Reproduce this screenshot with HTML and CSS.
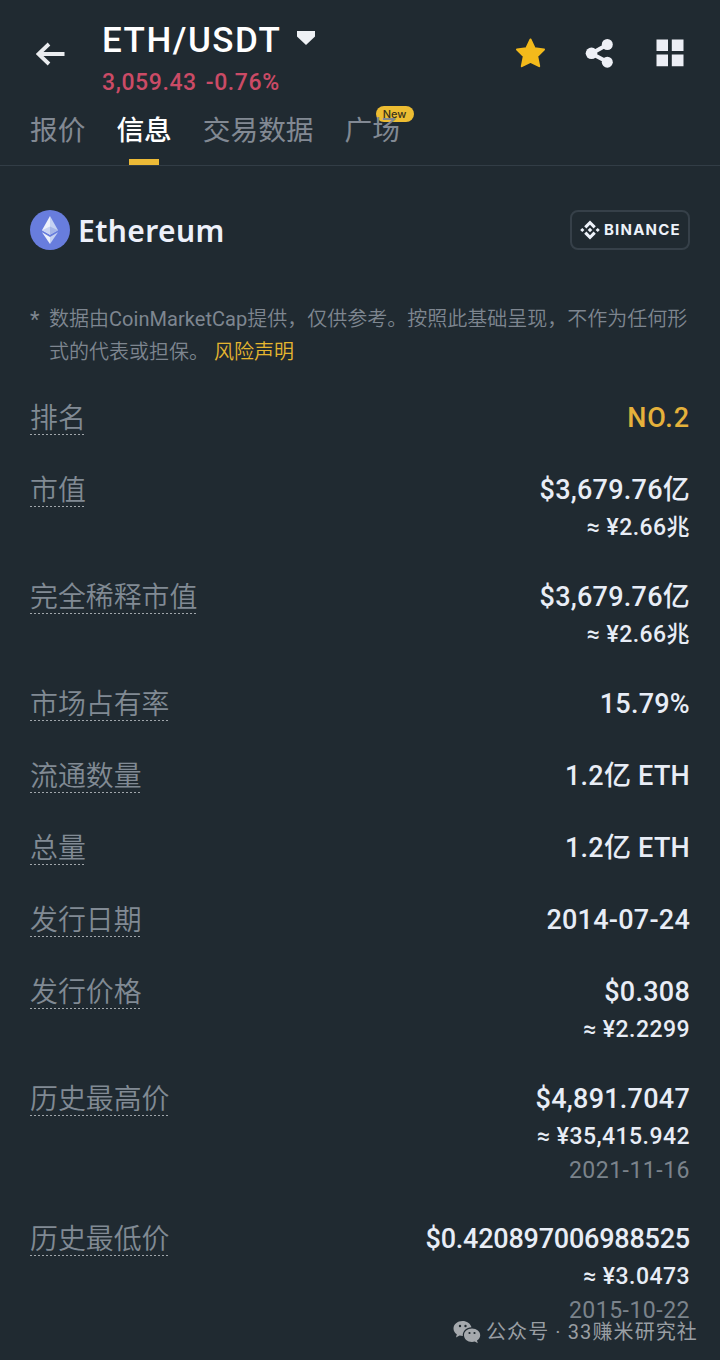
FILE: index.html
```html
<!DOCTYPE html>
<html lang="zh-CN">
<head>
<meta charset="utf-8">
<title>ETH/USDT</title>
<link rel="stylesheet" href="styles.css">
</head>
<body>
<header class="header">
  <svg class="back" width="30" height="24" viewBox="0 0 30 24" fill="none" stroke="#eaecef" stroke-width="3.800"><path d="M28.500 12H3M13 2 2.500 12 13 22"/></svg>
  <div class="pair">
    <div class="pair-name"><span class="pair-title">ETH/USDT</span><svg width="20" height="16" viewBox="0 0 20 16"><path d="M1 1h18v5.500L10 15 1 6.500z" fill="#eef1f5"/></svg></div>
    <div class="pair-price"><span>3,059.43</span><span>-0.76%</span></div>
  </div>
  <div class="actions">
    <svg width="32" height="32" viewBox="0 0 32 32"><path d="M16.500 2.500 20.600 11.200 30 12.500 23.200 19.200 25.200 29.200 16.500 24.800 7.800 29.200 9.800 19.200 3 12.500 12.400 11.200z" fill="#f3ba1b" stroke="#f3ba1b" stroke-width="2" stroke-linejoin="round"/></svg>
    <svg width="32" height="32" viewBox="0 0 32 32" fill="#eef0f6"><path d="M23.500 7.500 7.500 16.500l16 8.500" fill="none" stroke="#eef0f6" stroke-width="4"/><circle cx="23.300" cy="7.500" r="5.500"/><circle cx="7.500" cy="16.300" r="5.800"/><circle cx="23.300" cy="25.200" r="5.500"/></svg>
    <svg width="32" height="32" viewBox="0 0 32 32" fill="#eceef5"><path d="M2.500 2.500H14V14H2.500zM17.800 2.500h11.700V14H17.800zM2.500 17.500H14v11.800H2.500zM17.800 17.500h11.700v11.800H17.800z"/></svg>
  </div>
</header>
<nav class="tabs">
  <span class="tab">报价</span>
  <span class="tab tab-active">信息</span>
  <span class="tab">交易数据</span>
  <span class="tab"><b class="badge">New</b><span class="tab-label">广场</span></span>
</nav>
<main class="content">
  <div class="coin">
    <svg width="40" height="40" viewBox="0 0 40 40"><circle cx="20" cy="20" r="20" fill="#687ddd"/><path d="M20 6v18.800l-8-4.600z" fill="#eef2fb"/><path d="M20 6v18.800l8-4.600z" fill="#c5d1f2"/><path d="M20 16.500v8.300l-8-4.600z" fill="#c9d4f3"/><path d="M20 16.500v8.300l8-4.600z" fill="#a5b5e8"/><path d="M12 22.300l8 4.700v7z" fill="#edf2fb"/><path d="M28 22.300 20 27v7z" fill="#c5d1f2"/></svg>
    <h1 class="coin-name">Ethereum</h1>
    <div class="brand">
      <svg width="20" height="20" viewBox="0 0 20 20" fill="#edf2fa"><path d="M10 .4l5.800 5.800-2.200 2.200L10 4.800 6.400 8.400 4.200 6.200zM10 19.600l5.800-5.800-2.200-2.200L10 15.200l-3.600-3.600-2.200 2.200zM10 7.700l2.300 2.300-2.300 2.300L7.700 10zM2.300 7.900 4.400 10l-2.100 2.100L.2 10zM17.700 7.900l2.100 2.100-2.100 2.100-2.100-2.100z"/></svg>
      <span class="brand-name">BINANCE</span>
    </div>
  </div>
  <div class="note"><span class="star">*</span><p class="note-text">数据由<span class="latin">CoinMarketCap</span>提供，仅供参考。按照此基础呈现，不作为任何形<br>式的代表或担保。<a class="risk">风险声明</a></p></div>
  <section class="stats">
    <div class="row"><span class="label">排名</span><div class="values"><div class="main rank">NO.2</div></div></div>
    <div class="row"><span class="label">市值</span><div class="values"><div class="main">$3,679.76亿</div><div class="sub">≈ ¥2.66兆</div></div></div>
    <div class="row"><span class="label">完全稀释市值</span><div class="values"><div class="main">$3,679.76亿</div><div class="sub">≈ ¥2.66兆</div></div></div>
    <div class="row"><span class="label">市场占有率</span><div class="values"><div class="main">15.79%</div></div></div>
    <div class="row"><span class="label">流通数量</span><div class="values"><div class="main">1.2亿 ETH</div></div></div>
    <div class="row"><span class="label">总量</span><div class="values"><div class="main">1.2亿 ETH</div></div></div>
    <div class="row"><span class="label">发行日期</span><div class="values"><div class="main">2014-07-24</div></div></div>
    <div class="row"><span class="label">发行价格</span><div class="values"><div class="main">$0.308</div><div class="sub">≈ ¥2.2299</div></div></div>
    <div class="row"><span class="label">历史最高价</span><div class="values"><div class="main">$4,891.7047</div><div class="sub">≈ ¥35,415.942</div><div class="date">2021-11-16</div></div></div>
    <div class="row"><span class="label">历史最低价</span><div class="values"><div class="main main-long">$0.420897006988525</div><div class="sub">≈ ¥3.0473</div><div class="date">2015-10-22</div></div></div>
  </section>
</main>
<div class="watermark">
  <svg width="28" height="24" viewBox="0 0 28 24"><path d="M9.500 1C4.500 1 .5 4.300.5 8.500c0 2.400 1.300 4.400 3.300 5.800L3 17.500l3.600-1.900c1 .3 2 .4 3.200.4-.3-5.200 3.700-8.700 8.700-8.700C17.400 3.400 13.800 1 9.500 1z" fill="#a5a9ad"/><path d="M19 8.500c-4.700 0-8 3-8 6.700s3.300 6.700 8 6.700c1 0 2-.2 2.800-.4l3 1.700-.8-2.800c1.900-1.200 3.200-3.100 3.200-5.200 0-3.700-3.500-6.700-8.200-6.700z" fill="#a5a9ad"/><g fill="#1f292f"><circle cx="7" cy="6" r="1.200"/><circle cx="12.500" cy="6" r="1.200"/><circle cx="16.500" cy="13" r="1.100"/><circle cx="21.500" cy="13" r="1.100"/></g></svg>
  <span class="watermark-text">公众号 · 33赚米研究社</span>
</div>
</body>
</html>
```
FILE: styles.css
```css
* { box-sizing: border-box; }
body {
  margin: 0;
  width: 720px;
  height: 1360px;
  overflow: hidden;
  position: relative;
  background: #202a31;
  color: #e8edf6;
  font-family: Roboto, "Noto Sans CJK SC", sans-serif;
}
svg { display: block; flex: none; }
.header { display: flex; height: 104px; padding: 16px 34px 0 36px; }
.back { margin-top: 26px; }
.pair { margin-left: 36px; flex: 1; }
.pair-name { display: flex; align-items: center; height: 48px; padding-top: 1px; gap: 15px; }
.pair-name svg { margin-bottom: 6px; }
.pair-title { font-size: 35px; line-height: 48px; font-weight: 500; letter-spacing: 1.5px; color: #fff; }
.pair-price { display: flex; gap: 9px; height: 36px; padding-top: 1px; line-height: 36px; font-size: 23px; font-weight: 500; letter-spacing: .6px; color: #cb4b66; }
.actions { display: flex; gap: 38px; padding-top: 21px; }
.tabs { display: flex; gap: 31px; height: 62px; padding-left: 30px; border-bottom: 1px solid #323d46; }
.tab { position: relative; font-family: "Noto Sans CJK SC", sans-serif; font-size: 27.7px; line-height: 48px; color: #828993; font-weight: 400; }
.tab-active { color: #fff; font-weight: 500; }
.tab-active::after { content: ""; position: absolute; left: 13px; top: 55px; width: 30px; height: 6px; background: #ecba37; }
.tab-label { position: relative; }
.badge { position: absolute; left: 31px; top: 2px; width: 38px; height: 16px; border-radius: 8px; background: #edbd32; color: #3a331d; font: 500 11px/16px Inter, sans-serif; text-align: center; }
.content { padding: 44px 30px 0; }
.coin { display: flex; align-items: center; height: 40px; }
.coin-name { margin: 2px auto 0 8px; font: 600 30px/40px "Noto Sans", sans-serif; letter-spacing: .4px; color: #edf0fa; }
.brand { display: flex; align-items: center; gap: 4px; width: 120px; height: 40px; padding-left: 8px; border: 2px solid #364049; border-radius: 8px; }
.brand-name { font: 700 15px/20px Inter, sans-serif; letter-spacing: 1.2px; color: #edf2fa; }
.note { display: flex; height: 78px; margin-top: 53px; color: #7e8690; font-size: 20px; line-height: 33px; }
.star { width: 19px; font-size: 22px; }
.note-text { margin: 0; font-weight: 350; white-space: nowrap; }
.latin { font-weight: 400; letter-spacing: .05px; }
.risk { margin-left: 5px; color: #e5b62f; }
.row { display: flex; justify-content: space-between; align-items: flex-start; min-height: 72px; padding: 18px 0 14px; }
.label { height: 36px; font-family: "Noto Sans CJK SC", sans-serif; font-size: 27.9px; line-height: 34px; font-weight: 350; color: #818a94; background: repeating-linear-gradient(90deg, #a0a6ab 0 2px, transparent 2px 4px) left bottom / 100% 1px no-repeat; }
.values { text-align: right; white-space: nowrap; font-weight: 500; }
.main { height: 36px; line-height: 38px; font-size: 27px; letter-spacing: .25px; }
.main-long { letter-spacing: -.22px; }
.rank { color: #e5b13b; letter-spacing: .9px; }
.sub { height: 39px; line-height: 41px; font-size: 23px; letter-spacing: .45px; }
.date { height: 29px; margin-bottom: 4px; line-height: 31px; font-size: 23px; font-weight: 400; letter-spacing: .5px; color: #7b838b; }
.watermark { position: absolute; left: 453px; top: 1319px; display: flex; align-items: center; gap: 5px; height: 26px; }
.watermark-text { font-size: 20px; line-height: 26px; letter-spacing: 1.1px; color: #999ea3; white-space: nowrap; }
```
